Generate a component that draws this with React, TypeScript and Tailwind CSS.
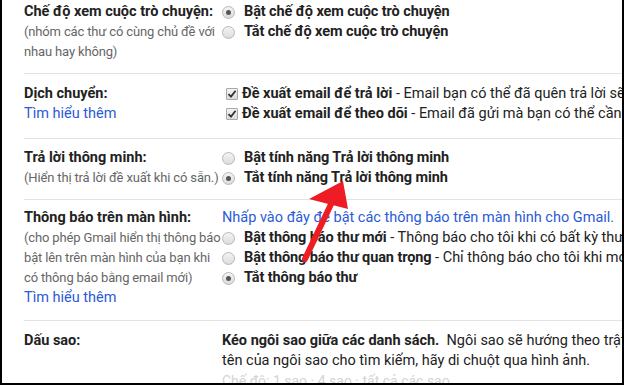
import React from 'react';

const font = { fontFamily: 'Roboto, "Liberation Sans", Arial, sans-serif' };

function Radio({ checked }: { checked?: boolean }) {
  return (
    <span className="w-[13px] h-[13px] rounded-full border border-[#b8b8b8] bg-gradient-to-b from-[#f4f4f4] to-[#dcdcdc] flex items-center justify-center shrink-0">
      {checked && <span className="w-[5px] h-[5px] rounded-full bg-[#555]" />}
    </span>
  );
}

function Check() {
  return (
    <span className="w-[12px] h-[12px] border border-[#a8a8a8] bg-gradient-to-b from-[#f4f4f4] to-[#dcdcdc] flex items-center justify-center shrink-0 rounded-[1px]">
      <svg width="10" height="10" viewBox="0 0 10 10">
        <path d="M1.5 5.2 L4 7.6 L8.6 1.8" fill="none" stroke="#333" strokeWidth="1.8" />
      </svg>
    </span>
  );
}

function RadioRow({ checked, bold, rest }: { checked?: boolean; bold: string; rest?: string }) {
  return (
    <div className="h-5 flex items-center whitespace-nowrap">
      <Radio checked={checked} />
      <span className="ml-[9px] font-bold text-[#222] tracking-[-0.1px]">{bold}</span>
      {rest && <span className="text-[#222]">&nbsp;- {rest}</span>}
    </div>
  );
}

function CheckRow({ bold, rest }: { bold: string; rest: string }) {
  return (
    <div className="h-5 flex items-center whitespace-nowrap pl-[4px]">
      <Check />
      <span className="ml-[4px] font-bold text-[#222]">{bold}</span>
      <span className="text-[#222]">&nbsp;- {rest}</span>
    </div>
  );
}

const Divider = () => <div className="h-px bg-[#e2e2e2] ml-[22px]" />;

const Sub = ({ children }: { children: React.ReactNode }) => (
  <div className="text-[#666] text-[13px] tracking-[-0.15px]">{children}</div>
);

export default function App() {
  return (
    <div
      style={font}
      className="relative w-[624px] h-[385px] overflow-hidden bg-white border-l-2 border-r-2 border-b-2 border-black text-[14.5px] leading-5"
    >
      {/* Chế độ xem */}
      <div className="flex pt-[2px] pb-[11px]">
        <div className="w-[220px] pl-[22px] shrink-0 whitespace-nowrap">
          <div className="font-bold text-[#222]">Chế độ xem cuộc trò chuyện:</div>
          <Sub>(nhóm các thư có cùng chủ đề với</Sub>
          <Sub>nhau hay không)</Sub>
        </div>
        <div className="min-w-0">
          <RadioRow checked bold="Bật chế độ xem cuộc trò chuyện" />
          <RadioRow bold="Tắt chế độ xem cuộc trò chuyện" />
        </div>
      </div>
      <Divider />

      {/* Dịch chuyển */}
      <div className="flex pt-[10px] pb-[14px]">
        <div className="w-[220px] pl-[22px] shrink-0">
          <div className="font-bold text-[#222]">Dịch chuyển:</div>
          <div className="text-[#2a5bd7]">Tìm hiểu thêm</div>
        </div>
        <div className="min-w-0">
          <CheckRow bold="Đề xuất email để trả lời" rest="Email bạn có thể đã quên trả lời sẽ xuất hiện" />
          <CheckRow bold="Đề xuất email để theo dõi" rest="Email đã gửi mà bạn có thể cần theo dõi" />
        </div>
      </div>
      <Divider />

      {/* Trả lời thông minh */}
      <div className="flex pt-[9px] pb-[11px]">
        <div className="w-[220px] pl-[22px] shrink-0 whitespace-nowrap">
          <div className="font-bold text-[#222]">Trả lời thông minh:</div>
          <Sub>(Hiển thị trả lời đề xuất khi có sẵn.)</Sub>
        </div>
        <div className="min-w-0">
          <RadioRow bold="Bật tính năng Trả lời thông minh" />
          <RadioRow checked bold="Tắt tính năng Trả lời thông minh" />
        </div>
      </div>
      <Divider />

      {/* Thông báo */}
      <div className="flex pt-[8px] pb-[12px]">
        <div className="w-[220px] pl-[22px] shrink-0 whitespace-nowrap">
          <div className="font-bold text-[#222]">Thông báo trên màn hình:</div>
          <Sub>(cho phép Gmail hiển thị thông báo</Sub>
          <Sub>bật lên trên màn hình của bạn khi</Sub>
          <Sub>có thông báo bằng email mới)</Sub>
          <div className="text-[#2a5bd7]">Tìm hiểu thêm</div>
        </div>
        <div className="min-w-0">
          <div className="text-[#2a5bd7] whitespace-nowrap h-5">
            Nhấp vào đây để bật các thông báo trên màn hình cho Gmail.
          </div>
          <RadioRow bold="Bật thông báo thư mới" rest="Thông báo cho tôi khi có bất kỳ thư mới nào" />
          <RadioRow bold="Bật thông báo thư quan trọng" rest="Chỉ thông báo cho tôi khi mới có thư quan trọng" />
          <RadioRow checked bold="Tắt thông báo thư" />
        </div>
      </div>
      <Divider />

      {/* Dấu sao */}
      <div className="flex pt-[10px]">
        <div className="w-[220px] pl-[22px] shrink-0">
          <div className="font-bold text-[#222]">Dấu sao:</div>
        </div>
        <div className="min-w-0 whitespace-nowrap">
          <div className="text-[#222]">
            <span className="font-bold">Kéo ngôi sao giữa các danh sách.</span>&nbsp; Ngôi sao sẽ hướng theo trật tự
          </div>
          <div className="text-[#222]">tên của ngôi sao cho tìm kiếm, hãy di chuột qua hình ảnh.</div>
          <div className="text-[#d4d4d4] text-[14px]">Chế độ: 1 sao · 4 sao · tất cả các sao</div>
        </div>
      </div>

      {/* red arrow */}
      <svg className="absolute left-0 top-0 pointer-events-none" width="624" height="385">
        <line x1="303" y1="259" x2="331" y2="200" stroke="#ee1c24" strokeWidth="6" strokeLinecap="round" />
        <polygon points="341,181 307,199 346,209" fill="#ee1c24" />
      </svg>
    </div>
  );
}
